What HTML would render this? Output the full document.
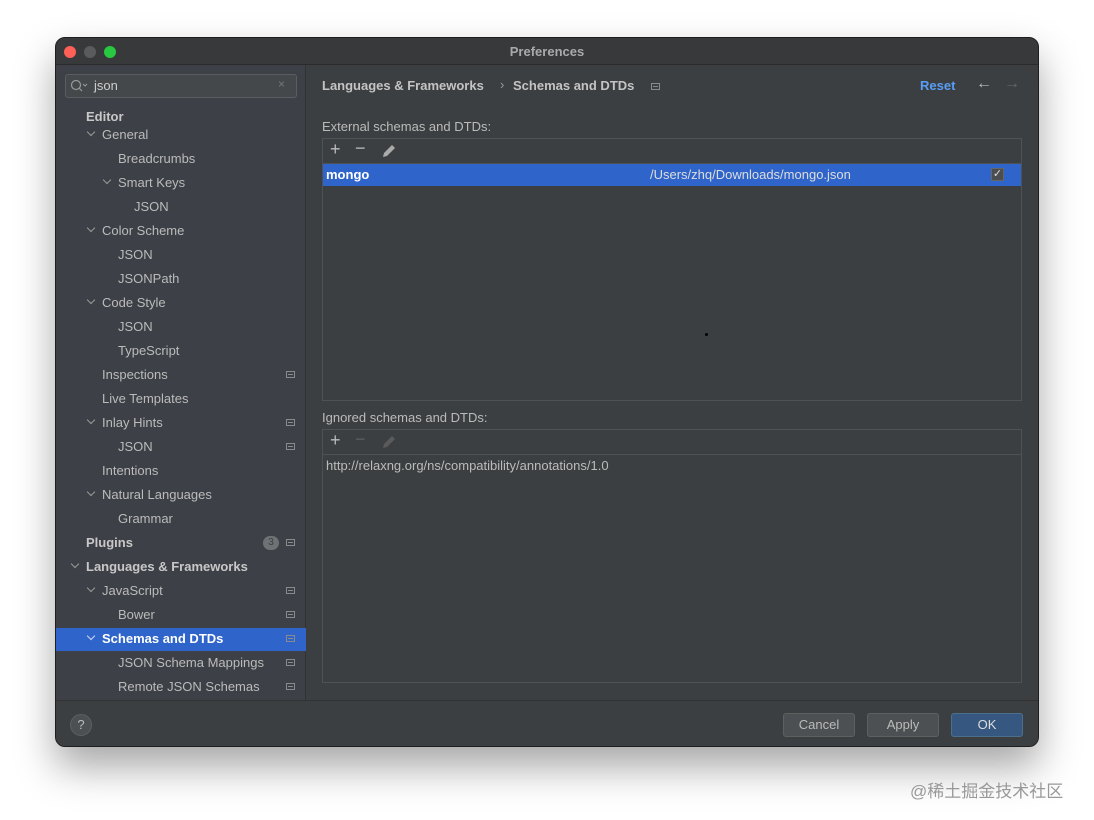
<!DOCTYPE html>
<html><head><meta charset="utf-8"><style>
*{margin:0;padding:0;box-sizing:border-box}
body{width:1094px;height:820px;background:#fff;font-family:"Liberation Sans",sans-serif;font-size:13px;color:#bbbbbb;position:relative;overflow:hidden}
.win{position:absolute;left:55px;top:37px;width:984px;height:710px;background:#3c3f41;border:1px solid #1e1e1e;border-radius:10px;overflow:hidden;box-shadow:0 20px 40px rgba(0,0,0,.35)}
.title{position:absolute;left:0;top:0;width:100%;height:27px;background:#38393b;border-bottom:1px solid #2b2b2b;text-align:center;line-height:27px;font-weight:bold;color:#aaa;font-size:13px}
.dot{position:absolute;top:8px;width:12px;height:12px;border-radius:50%}
.side{position:absolute;left:0;top:27px;width:250px;height:635px;background:#3d4046;border-right:1px solid #323232}
.t{position:absolute;white-space:nowrap;font-size:13px}
.b{font-weight:bold}
.arr{position:absolute;width:6px;height:6px;border-right:1.3px solid #999;border-bottom:1.3px solid #999;transform:rotate(45deg)}
.ic{position:absolute;width:9px;height:7px;border:1.3px solid #8a8a8a}
.ic:after{content:"";position:absolute;left:1px;right:1px;top:1.5px;height:1.3px;background:#8a8a8a}
.foot{position:absolute;left:0;top:662px;width:100%;height:48px;background:#3c3f41;border-top:1px solid #323232}
.btn{position:absolute;top:12px;height:24px;border:1px solid #5e6060;border-radius:3px;background:#4c5052;color:#bbb;text-align:center;line-height:22px;font-size:13px}
.box{position:absolute;border:1px solid #4f5254;background:#3c3f41}
</style></head><body>
<div class="win">
 <div class="title">Preferences</div>
 <div class="dot" style="left:8px;background:#fe5f57"></div>
 <div class="dot" style="left:28px;background:#5a5b5d"></div>
 <div class="dot" style="left:48px;background:#28c840"></div>
 <div class="side">
  <div style="position:absolute;left:9px;top:9px;width:232px;height:24px;border:1px solid #5a5d61;border-radius:3px;background:#45484b"></div>
  <svg style="position:absolute;left:14px;top:14px" width="18" height="14"><circle cx="6" cy="6" r="4.5" stroke="#999" fill="none" stroke-width="1.2"/><line x1="9" y1="9" x2="12" y2="12" stroke="#999" stroke-width="1.2"/><path d="M13 5l2 2 2-2" stroke="#999" fill="none"/></svg>
  <div class="t" style="left:38px;top:13px;color:#ccc">json</div>
  <div class="t" style="left:222px;top:12px;color:#777;font-size:12px">×</div>
 </div>
 <div id="tree"></div>
 <div style="position:absolute;left:251px;top:27px;right:0;height:635px">
  <div class="t b" style="left:15px;top:13px;color:#c4c4c4">Languages &amp; Frameworks</div>
  <div class="t" style="left:193px;top:12px;color:#999">›</div>
  <div class="t b" style="left:206px;top:13px;color:#c4c4c4">Schemas and DTDs</div>
  <div class="ic" style="left:344px;top:18px"></div>
  <div class="t b" style="left:613px;top:13px;color:#589df6">Reset</div>
  <div class="t" style="left:669px;top:10px;color:#bbb;font-size:16px">←</div>
  <div class="t" style="left:697px;top:10px;color:#666;font-size:16px">→</div>
  <div class="t" style="left:15px;top:54px">External schemas and DTDs:</div>
  <div class="box" style="left:15px;top:73px;width:700px;height:263px">
   <div style="height:25px;border-bottom:1px solid #4f5254;position:relative">
    <div class="t" style="left:7px;top:0px;font-size:18px;color:#bbb">+</div>
    <div class="t" style="left:32px;top:-1px;font-size:18px;color:#bbb">−</div>
    <svg style="position:absolute;left:58px;top:4px" width="16" height="16"><path d="M2 14l1-4 8-8 3 3-8 8z" fill="#aaa"/></svg>
   </div>
   <div style="height:22px;background:#2f65ca;position:relative">
    <div class="t b" style="left:3px;top:3px;color:#fff">mongo</div>
    <div class="t" style="left:327px;top:3px;color:#ddd">/Users/zhq/Downloads/mongo.json</div>
    <div style="position:absolute;left:668px;top:4px;width:13px;height:13px;background:#4b4e50;border:1px solid #666;color:#ddd;font-size:11px;line-height:11px;text-align:center">✓</div>
   </div>
   <div style="position:absolute;left:382px;top:194px;width:3px;height:3px;background:#000;border-radius:50%"></div>
  </div>
  <div class="t" style="left:15px;top:345px">Ignored schemas and DTDs:</div>
  <div class="box" style="left:15px;top:364px;width:700px;height:254px">
   <div style="height:25px;border-bottom:1px solid #4f5254;position:relative">
    <div class="t" style="left:7px;top:0px;font-size:18px;color:#bbb">+</div>
    <div class="t" style="left:32px;top:-1px;font-size:18px;color:#5d5d5d">−</div>
    <svg style="position:absolute;left:58px;top:4px" width="16" height="16"><path d="M2 14l1-4 8-8 3 3-8 8z" fill="#5a5a5a"/></svg>
   </div>
   <div class="t" style="left:3px;top:28px">http://relaxng.org/ns/compatibility/annotations/1.0</div>
  </div>
 </div>
 <div class="foot">
  <div style="position:absolute;left:14px;top:13px;width:22px;height:22px;border-radius:50%;background:#4c5052;border:1px solid #5e6060;text-align:center;line-height:20px;color:#bbb">?</div>
  <div class="btn" style="left:727px;width:72px">Cancel</div>
  <div class="btn" style="left:811px;width:72px">Apply</div>
  <div class="btn" style="left:895px;width:72px;background:#365880;border-color:#4c708c;color:#ddd">OK</div>
 </div>
</div>
<div class="t" style="left:910px;top:777px;font-size:17px;color:#999;font-family:'Liberation Sans','Noto Sans CJK SC',sans-serif">@稀土掘金技术社区</div>
<script>
var rows=[["Editor",0,1,0,0],["General",1,0,1,0],["Breadcrumbs",2,0,0,0],["Smart Keys",2,0,1,0],["JSON",3,0,0,0],["Color Scheme",1,0,1,0],["JSON",2,0,0,0],["JSONPath",2,0,0,0],["Code Style",1,0,1,0],["JSON",2,0,0,0],["TypeScript",2,0,0,0],["Inspections",1,0,0,1],["Live Templates",1,0,0,0],["Inlay Hints",1,0,1,1],["JSON",2,0,0,1],["Intentions",1,0,0,0],["Natural Languages",1,0,1,0],["Grammar",2,0,0,0],["Plugins",0,1,0,1],["Languages & Frameworks",0,1,1,0],["JavaScript",1,0,1,1],["Bower",2,0,0,1],["Schemas and DTDs",1,1,1,1],["JSON Schema Mappings",2,0,0,1],["Remote JSON Schemas",2,0,0,1]];
var h="",w=document.querySelector('.win');
rows.forEach(function(r,i){
 var cy=(i==0?79:97+(i-1)*24); /* center relative to win */
 var x=30+r[1]*16, sel=r[0]=="Schemas and DTDs";
 if(sel) h+='<div style="position:absolute;left:0;top:'+(cy-11)+'px;width:250px;height:23px;background:#2f65ca"></div>';
 if(r[3]) h+='<div class="arr" style="left:'+(x-14)+'px;top:'+(cy-6)+'px;border-color:'+(sel?'#cfd8ea':'#999')+'"></div>';
 h+='<div class="t'+(r[2]?' b':'')+'" style="left:'+x+'px;top:'+(cy-8)+'px;color:'+(sel?'#fff':(r[2]?'#c8c8c8':'#bbb'))+'">'+r[0].replace('&','&amp;')+'</div>';
 if(r[4]) h+='<div class="ic" style="left:230px;top:'+(cy-4)+'px"></div>';
 if(r[0]=="Plugins") h+='<div style="position:absolute;left:207px;top:'+(cy-7)+'px;width:16px;height:14px;border-radius:7px;background:#6e7275;color:#3c3f41;font-size:10px;text-align:center;line-height:14px">3</div>';
});
var d=document.createElement('div');d.innerHTML=h;w.appendChild(d);
</script>
</body></html>
